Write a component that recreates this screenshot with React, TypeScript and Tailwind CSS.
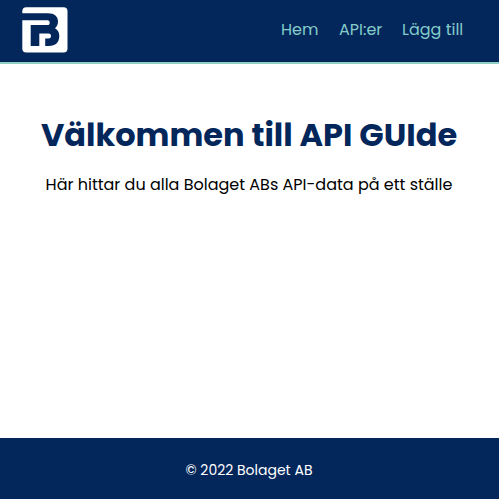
const font = "font-['Poppins','Inter','Open_Sans',sans-serif]";

function Logo() {
  return (
    <svg width="46" height="46" viewBox="0 0 46 46" aria-label="Bolaget">
      <rect x="0.3" y="0.2" width="45.2" height="45.4" rx="4" fill="#fff" />
      <path
        d="M0 6.3H26C32.5 6.3 36 9.5 36 14.5C36 17.5 35 19.5 33 21.2C36 23 37.3 25.5 37.3 29C37.3 35.5 33.5 39 27 39H23.2V31.5H26.5C28.3 31.5 29 30.5 29 29C29 27.3 28.3 26.4 26.5 26.4H17.3V39H8.7V18H25.5C27 18 27.7 17.2 27.7 15.7C27.7 14.2 27 13.3 25.5 13.3H0Z"
        fill="#03265b"
      />
    </svg>
  );
}

export default function App() {
  return (
    <div className={`flex h-[499px] w-full flex-col bg-white ${font}`}>
      <header className="flex h-16 shrink-0 justify-between border-b-2 border-[#8fcfc4] bg-[#03265b] pt-[7px] pr-[35px] pl-[22px]">
        <Logo />
        <nav className="flex gap-5 pt-[11px] text-base leading-6 text-[#84cdca]">
          <a className="w-[38px] whitespace-nowrap">Hem</a>
          <a className="w-[43px] whitespace-nowrap">API:er</a>
          <a className="w-[62px] whitespace-nowrap">Lägg till</a>
        </nav>
      </header>
      <main className="flex flex-1 flex-col items-center pr-px whitespace-nowrap">
        <h1 className="mt-[47px] text-[32px] leading-[48px] font-bold text-[#03265b]">Välkommen till API GUIde</h1>
        <p className="mt-[14px] text-base leading-6 text-black">Här hittar du alla Bolaget ABs API-data på ett ställe</p>
      </main>
      <footer className="flex h-[61px] shrink-0 items-center justify-center bg-[#03265b] pt-0.5 pr-px text-sm leading-5 text-white">
        © 2022 Bolaget AB
      </footer>
    </div>
  );
}
